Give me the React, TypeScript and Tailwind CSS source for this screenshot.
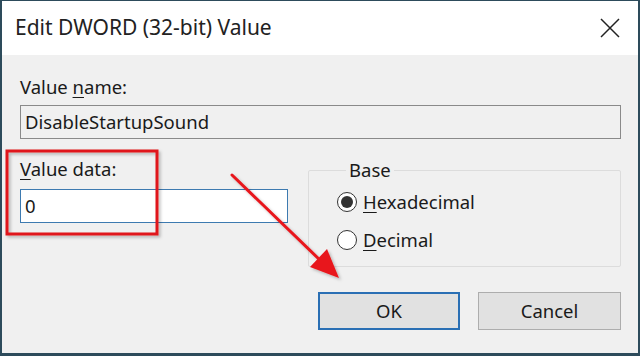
function Radio({ checked, label, hot }: { checked?: boolean; label: string; hot: string }) {
  return (
    <div className="flex items-center gap-[6px]">
      <span className="flex h-[20px] w-[20px] items-center justify-center rounded-full border-[1.5px] border-[#333] bg-white">
        {checked && <span className="h-[12px] w-[12px] rounded-full bg-[#333]" />}
      </span>
      <span>
        <u className="underline-offset-[3px]">{hot}</u>
        {label.slice(1)}
      </span>
    </div>
  );
}

export default function App() {
  return (
    <div
      className="relative flex h-[356px] w-[640px] flex-col overflow-hidden border-x-[2px] border-t-[1px] border-b-[3px] border-[#2d4b5b] bg-[#f0f0f0] text-[18.5px] text-[#1a1a1a]"
      style={{ fontFamily: '"Noto Sans", "Open Sans", sans-serif' }}
    >
      <div className="flex h-[54px] shrink-0 items-center justify-between bg-white pl-[13px] pr-[18px]">
        <span className="text-[21px] text-[#222]">Edit DWORD (32-bit) Value</span>
        <svg width="20" height="20" viewBox="0 0 20 20" className="mb-[1px]">
          <path d="M1 1 L19 19 M19 1 L1 19" stroke="#222" strokeWidth="1.5" fill="none" />
        </svg>
      </div>

      <div className="flex flex-1 flex-col pl-[18px] pr-[17px]">
        <div className="mt-[20px] leading-[24px]">
          Value <u className="underline-offset-[3px]">n</u>ame:
        </div>
        <div className="mt-[6px] flex h-[34px] items-center border border-[#8a8a8a] bg-[#f0f0f0] px-[4px] leading-none">
          DisableStartupSound
        </div>

        <div className="mt-[12px] flex gap-[20px]">
          <div className="flex w-[268px] flex-col">
            <div className="mt-[6px] leading-[24px]">
              <u className="underline-offset-[3px]">V</u>alue data:
            </div>
            <div className="mt-[8px] flex h-[34px] items-center border border-[#3d7ab0] bg-white px-[4px] leading-none">
              0
            </div>
          </div>
          <fieldset className="relative mt-[9px] h-[107px] flex-1 rounded-[2px] border border-[#dcdcdc] pl-[28px] pr-2 pt-[10px]">
            <legend className="ml-[9px] px-[3px] leading-[20px]">Base</legend>
            <div className="flex flex-col gap-[14px] leading-[24px]">
              <Radio checked label="Hexadecimal" hot="H" />
              <Radio label="Decimal" hot="D" />
            </div>
          </fieldset>
        </div>

        <div className="mt-[25px] flex justify-end gap-[18px]">
          <button className="h-[38px] w-[142px] border-[2px] border-[#2a6fb4] bg-[#e1e1e1] leading-none">OK</button>
          <button className="h-[38px] w-[143px] border border-[#adadad] bg-[#e1e1e1] leading-none">Cancel</button>
        </div>
      </div>

      {/* annotation overlay */}
      <svg className="pointer-events-none absolute left-[-2px] top-[-1px]" width="640" height="356">
        <defs>
          <filter id="sh" x="-10%" y="-10%" width="130%" height="130%">
            <feDropShadow dx="2" dy="2" stdDeviation="1.5" floodColor="#000" floodOpacity="0.25" />
          </filter>
        </defs>
        <rect x="7" y="151" width="150" height="83" fill="none" stroke="#e0141a" strokeWidth="3" filter="url(#sh)" />
        <g filter="url(#sh)">
          <line x1="232" y1="175" x2="322" y2="262" stroke="#e8151b" strokeWidth="3" strokeLinecap="round" />
          <polygon points="339,278 310,267 327,249" fill="#e8151b" />
        </g>
      </svg>
    </div>
  );
}
